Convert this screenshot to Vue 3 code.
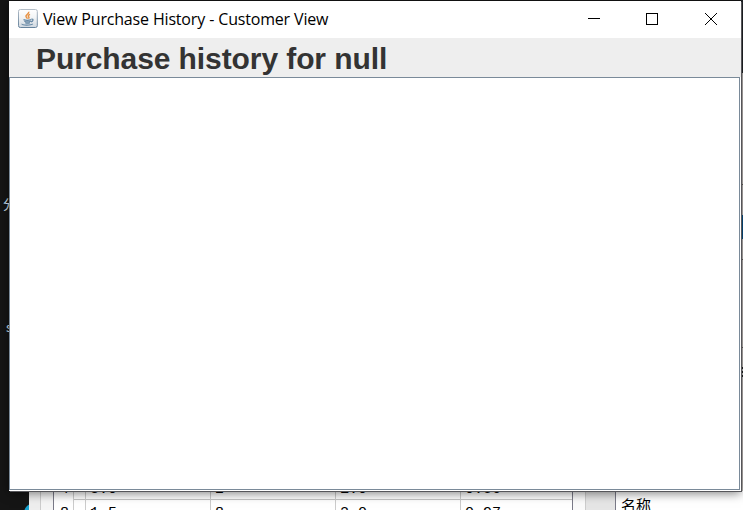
<script setup>
const rows = [
  ['4', '', '3.0', '2', '1.0', '0.56'],
  ['8', '', '1.5', '8', '2.0', '0.97'],
]
</script>

<template>
  <div class="desktop">
    <span class="desk-label first">分</span>
    <span class="desk-label second">s</span>
    <span class="blue-icon"></span>
    <div class="backdrop">
      <div class="gutter"></div>
      <div class="sheet">
        <div v-for="(row, r) in rows" :key="r" class="row">
          <span v-for="(cell, c) in row" :key="c" class="cell">{{ cell }}</span>
        </div>
      </div>
      <div class="scroll-gap"></div>
      <div class="side">名称</div>
    </div>
    <div class="edge">
      <i class="dark"></i><i class="gray"></i><i class="tick"></i><i class="gray two"></i><i class="blue"></i>
      <i class="gray three"></i><i class="tick"></i><i class="gray four"></i><i class="tick"></i><i class="gray five"></i>
      <i class="glyph"></i>
    </div>
    <main class="window">
      <header class="titlebar">
        <svg class="java" width="20" height="20" viewBox="0 0 20 20">
          <defs>
            <linearGradient id="tile" x1="0" y1="0" x2="0" y2="1">
              <stop offset="0" stop-color="#fff" />
              <stop offset=".45" stop-color="#f2f4f6" />
              <stop offset="1" stop-color="#cfd7df" />
            </linearGradient>
            <linearGradient id="rim" x1="0" y1="0" x2="0" y2="1">
              <stop offset="0" stop-color="#b3bdc7" />
              <stop offset="1" stop-color="#66839d" />
            </linearGradient>
          </defs>
          <rect x=".5" y=".5" width="18.8" height="18" rx="1.8" fill="url(#tile)" stroke="url(#rim)" />
          <path d="M10.7 2.8c.7 2.2-3.3 2.7-2.7 4.8.2.8 1.3 1.2 1.3 2.1M12 5.4c-2 .9-2.1 1.7-1.2 2.5.5.6.2 1.1-.4 1.7" fill="none" stroke="#e79245" stroke-width="1.5" />
          <path d="M5.5 10.6c1.8.7 5.9.7 7.8 0M6.3 12.2c1.7.6 4.7.6 6.5 0M7.2 13.7c1.3.5 3.6.5 4.8 0M13.4 10c2.4-.2 2 2.3-.4 2.8M4.2 14.8c-1.2 1.7 8.9 1.8 10.6.1" fill="none" stroke="#6688a5" stroke-width="1.2" />
        </svg>
        <span class="title">View Purchase History - Customer View</span>
        <div class="controls">
          <svg width="12" height="12" viewBox="0 0 12 12" shape-rendering="crispEdges"><path d="M0 5.5h12" /></svg>
          <svg width="12" height="12" viewBox="0 0 12 12" shape-rendering="crispEdges"><path d="M.5.5h11v11H.5z" /></svg>
          <svg width="12" height="12" viewBox="0 0 12 12"><path d="M0 0l12 12M12 0L0 12" /></svg>
        </div>
      </header>
      <h1><span>Purchase history for null</span></h1>
      <section class="history"></section>
    </main>
  </div>
</template>

<style>
body { overflow: hidden; }
</style>

<style scoped>
* { box-sizing: border-box; }
.desktop { position: relative; width: 743px; height: 510px; overflow: hidden; background: #151515; font-family: "Liberation Sans", sans-serif; }
.window { position: absolute; left: 9px; top: 1px; width: 732px; height: 490px; display: flex; flex-direction: column; background: #fff; box-shadow: 1px 1px 0 #56565a, 0 2px 10px #0008; }
.titlebar { height: 37px; flex: none; display: flex; align-items: center; padding-left: 9px; background: #fff; }
.java { flex: none; margin-right: 5px; margin-top: -2px; }
.title { font: 16px/22px "Open Sans", "Noto Sans", sans-serif; color: #000; white-space: nowrap; width: 286px; letter-spacing: -.19px; word-spacing: .2px; margin-top: -2px; }
.controls { display: flex; gap: 47px; margin-left: auto; padding-right: 24px; margin-top: -1px; }
.controls svg { display: block; fill: none; stroke: #000; stroke-width: 1; }
.controls svg:first-child { margin-right: -1px; }
h1 { margin: 0; height: 39px; flex: none; padding-left: 27px; background: #eee; color: #333; font: bold 30px/41px "Liberation Sans", sans-serif; letter-spacing: -.09px; white-space: nowrap; }
.history { flex: 1; margin: 0 1px 1px 0; border: 1px solid #7a8a99; background: #fff; }
.backdrop { position: absolute; left: 29px; top: 482px; width: 714px; height: 28px; display: flex; background: #fafafa; }
.gutter { width: 24px; border-left: 11px solid #eee; background: #f5f5f5; box-shadow: inset 1px 0 #ccc; }
.sheet { width: 520px; border-left: 1px solid #7a7a88; border-right: 1px solid #7a7a88; background: #fff; }
.row { height: 18px; display: grid; grid-template-columns: 20px 12px 125px 125px 125px 111px; font: 15px/18px "Liberation Mono", monospace; color: #000; }
.row:nth-child(1) .cell { border-bottom: 1px solid #c4c4c4; line-height: 16px; }
.row:nth-child(1) .cell:first-child { border-bottom: 0; }
.row:nth-child(2) .cell { height: 28px; line-height: 27px; }
.cell { padding-left: 4px; border-right: 1px solid #ccc; white-space: nowrap; }
.cell:first-child { padding-left: 6px; }
.cell:last-child { border-right: 0; }
.scroll-gap { width: 30px; margin-left: 12px; border-left: 1px solid #ccc; background: #e5e5e5; }
.side { flex: 1; border-left: 1px solid #7a7a88; padding: 13px 0 0 5px; font: 15px/20px "Noto Sans CJK SC", sans-serif; color: #000; background: #fff; }
.edge { position: absolute; left: 741px; top: 0; width: 2px; height: 491px; display: flex; flex-direction: column; background: #bcb8b5; }
.edge i { flex: none; height: 1px; }
.edge .dark { height: 73px; background: #222428; }
.edge .gray { height: 111px; background: #bcb8b5; }
.edge .tick { background: #66605e; }
.edge .two { height: 30px; }
.edge .blue { height: 24px; background: #075086; }
.edge .three { height: 20px; }
.edge .four { height: 87px; }
.edge .five { height: 19px; }
.edge .glyph { height: 12px; background: repeating-linear-gradient(#222 0 2px, #bbb 2px 4px); }
.desk-label { position: absolute; color: #ddecff; font: 13px/16px "Noto Sans CJK SC", sans-serif; }
.first { left: 3px; top: 196px; }
.second { left: 6px; top: 319px; }
.blue-icon { position: absolute; left: 24px; top: 503px; width: 20px; height: 20px; border-radius: 50%; background: #16a2cf; }
</style>
